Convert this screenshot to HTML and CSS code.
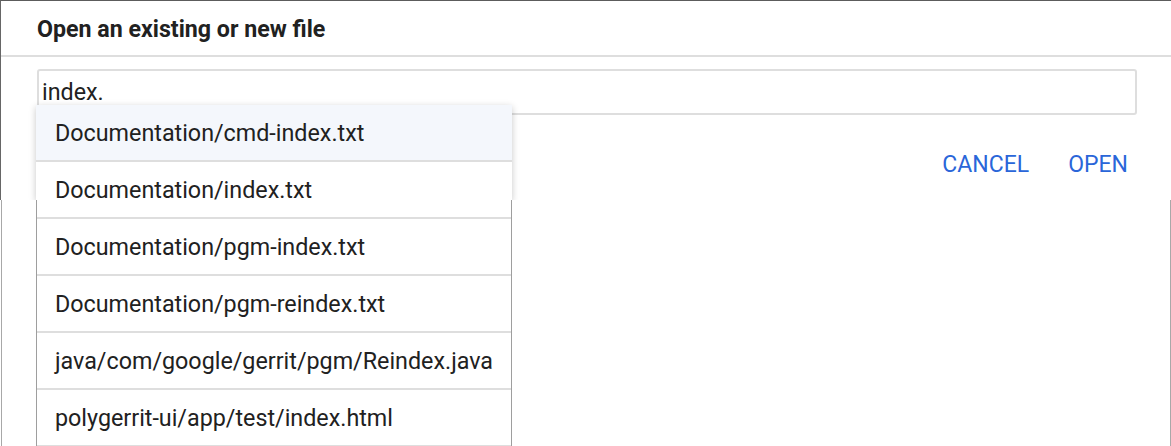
FILE: index.html
```html
<!DOCTYPE html>
<html>
<head>
<meta charset="utf-8">
<link rel="stylesheet" href="styles.css">
</head>
<body>
<div class="dialog">
  <header class="dlg-header"><h2 class="dlg-title">Open an existing or new file</h2></header>
  <div class="dlg-body">
    <div class="autocomplete">
      <div class="input">index.</div>
      <div class="dropdown">
        <div class="dropdown-shadow"></div>
        <ul class="suggestions">
          <li class="suggestion selected">Documentation/cmd-index.txt</li>
          <li class="suggestion">Documentation/index.txt</li>
          <li class="suggestion">Documentation/pgm-index.txt</li>
          <li class="suggestion">Documentation/pgm-reindex.txt</li>
          <li class="suggestion">java/com/google/gerrit/pgm/Reindex.java</li>
          <li class="suggestion">polygerrit-ui/app/test/index.html</li>
        </ul>
      </div>
    </div>
    <div class="actions">
      <button class="btn">CANCEL</button>
      <button class="btn">OPEN</button>
    </div>
  </div>
</div>
<div class="below"></div>
</body>
</html>
```

FILE: styles.css
```css
html, body {
  margin: 0;
  padding: 0;
  background: #fff;
  height: 100%;
  overflow: hidden;
}
body {
  font-family: Roboto, "Liberation Sans", sans-serif;
  color: #212121;
  display: flex;
  flex-direction: column;
}
.dialog {
  box-sizing: border-box;
  height: 200px;
  border-top: 1px solid #5c5c5c;
  border-left: 1px solid #666;
  background: #fff;
  flex: none;
}
.dlg-header {
  box-sizing: border-box;
  height: 56px;
  padding: 2px 0 0 36px;
  border-bottom: 2px solid #dedede;
}
.dlg-title {
  margin: 0;
  font-size: 23.2px;
  font-weight: 700;
  line-height: 52px;
  color: #212121;
}
.dlg-body {
  padding: 12px 34px 0 36px;
}
.autocomplete {
  position: relative;
}
.input {
  box-sizing: border-box;
  height: 46px;
  border: 2px solid #dedede;
  border-radius: 3px;
  padding-left: 3px;
  font-size: 23.3px;
  line-height: 42px;
  color: #212121;
}
.dropdown {
  position: absolute;
  left: -1px;
  top: 36px;
  width: 476px;
  z-index: 5;
}
.dropdown-shadow {
  position: absolute;
  left: 0;
  top: 0;
  right: 0;
  height: 95px;
  box-shadow: 0 2px 7px rgba(0, 0, 0, 0.22);
  clip-path: inset(-12px -12px 0 -12px);
}
.suggestions {
  position: relative;
  list-style: none;
  margin: 0;
  padding: 0;
  background: #fff;
}
.suggestions::before {
  content: "";
  position: absolute;
  left: 0;
  right: 0;
  top: 95px;
  bottom: 0;
  border-left: 1px solid #9e9e9e;
  border-right: 1px solid #9e9e9e;
  pointer-events: none;
}
.suggestion {
  height: 54px;
  padding-top: 1px;
  line-height: 55px;
  padding-left: 19px;
  font-size: 23.3px;
  color: #212121;
  border-bottom: 2px solid #dedede;
  white-space: nowrap;
}
.suggestion.selected {
  background: #f4f7fc;
}
.actions {
  display: flex;
  justify-content: flex-end;
  gap: 21px;
  margin-top: 30px;
}
.btn {
  border: 0;
  background: none;
  padding: 0 9px;
  height: 40px;
  line-height: 40px;
  font-family: Roboto, "Liberation Sans", sans-serif;
  font-size: 23px;
  font-weight: 400;
  color: #2a66d9;
}
.below {
  flex: 1;
  margin-left: 1px;
  border-left: 1px solid #a8a8a8;
  border-right: 1px solid #a8a8a8;
}
```
